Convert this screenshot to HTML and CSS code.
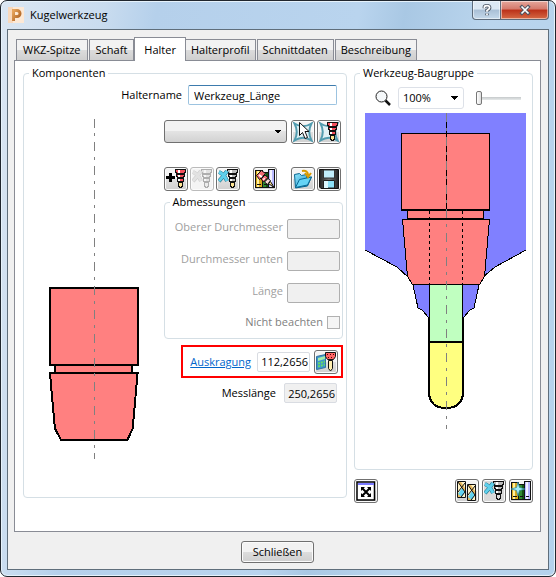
FILE: index.html
```html
<!DOCTYPE html>
<html lang="de">
<head>
<meta charset="utf-8">
<title>Kugelwerkzeug</title>
<link rel="stylesheet" href="styles.css">
</head>
<body>
<svg class="defs" aria-hidden="true">
  <defs>
    <linearGradient id="copper" x1="0" y1="0" x2="1" y2="1"><stop offset="0" stop-color="#e6a45c"/><stop offset="1" stop-color="#a75a1c"/></linearGradient>
    <linearGradient id="disk" x1="0" x2="1"><stop offset="0" stop-color="#222"/><stop offset=".5" stop-color="#777"/><stop offset="1" stop-color="#222"/></linearGradient>
    <linearGradient id="folder" x1="0" x2="1" y2="1"><stop offset="0" stop-color="#8ee6fb"/><stop offset="1" stop-color="#1687c4"/></linearGradient>
    <g id="tool">
      <path d="M.5.5h10v3h-1v1h-8v-1h-1zM1.500 5.500h8v2h-1v1h-6v-1h-1zM2.500 9.500h6v3h-6z"/>
      <path class="bit" d="M3.500 13.500h4v3l-1 2h-2l-1-2z"/>
      <path class="shine" d="M4 1v3M4 6v2M4 10v2"/>
    </g>
    <path id="star" d="M1.500 1.500Q10 7 18.500 1.500Q14 10 18.500 18.500Q10 13 1.500 18.500Q6 10 1.500 1.500z"/>
    <g id="cross"><path class="cross-edge" d="M1 2q5 2 8 9M9 1Q6 6 1 11"/><path class="cross-core" d="M1 2q5 2 8 9M9 1Q6 6 1 11"/></g>
    <g id="books" shape-rendering="crispEdges">
      <path fill="#d9a91c" stroke="#111" d="M.5 1.500h7v17h-7z"/><path fill="#fff0a0" d="M2 2h2v16H2z"/>
      <path fill="#2f8a2f" stroke="#111" d="M7.500 3.500h6v15h-6z"/><path fill="#145214" d="M11 4h2v14h-2z"/>
      <path fill="#b9b9ff" stroke="#111" d="M13.500.5h6v18h-6z"/><path fill="#f3f3ff" d="M15 1h2v17h-2z"/>
      <path stroke="#111" d="M2 15.500h4M9 15.500h3M15 15.500h3"/>
    </g>
  </defs>
</svg>

<div class="window">
  <header class="titlebar">
    <svg class="app-icon" viewBox="0 0 16 16" aria-hidden="true"><path fill="#fde9d6" d="M0 0h16v16H0z"/><path fill="#f6cfac" d="M0 0h5v16H0z" opacity=".6"/><path fill="none" stroke="url(#copper)" stroke-width="3" d="M5.500 14V3.500H9a2.700 2.700 0 0 1 0 6H6"/></svg>
    <h1>Kugelwerkzeug</h1>
    <div class="caption-buttons">
      <button class="caption help" aria-label="Hilfe"><svg viewBox="0 0 16 16"><path class="glyph-edge" d="M5 6V4.500Q5 3 8 3t3 2.500Q11 7 8 8.500V10M8 12v2"/><path class="glyph" d="M5 6V4.500Q5 3 8 3t3 2.500Q11 7 8 8.500V10M8 12v2"/></svg></button>
      <button class="caption close" aria-label="Fenster schließen"><svg viewBox="0 0 16 16"><path class="glyph-edge" d="M3 3l10 10M13 3L3 13"/><path class="glyph" d="M4 4l8 8M12 4l-8 8"/></svg></button>
    </div>
  </header>

  <main class="client">
    <div class="tabs" role="tablist">
      <button class="tab" role="tab">WKZ-Spitze</button>
      <button class="tab" role="tab">Schaft</button>
      <button class="tab active" role="tab" aria-selected="true">Halter</button>
      <button class="tab" role="tab">Halterprofil</button>
      <button class="tab" role="tab">Schnittdaten</button>
      <button class="tab" role="tab">Beschreibung</button>
    </div>

    <div class="panel" role="tabpanel">
      <fieldset class="group components">
        <legend>Komponenten</legend>
        <div class="name-row">
          <label for="name">Haltername</label>
          <input class="name" id="name" value="Werkzeug_Länge">
        </div>
        <div class="component-body">
          <svg class="holder-drawing" viewBox="0 0 140 342" role="img" aria-label="Halter">
            <g class="heavy holder">
              <path d="M26 170h88v77H26z"/><path d="M31 247h77v8H31z"/>
              <path d="M26 255h88l-5 56-5 11H37l-6-11z"/>
            </g>
            <path class="axis" d="M70.500 0v342"/>
          </svg>
          <div class="settings">
            <div class="tool-row">
              <select class="component-select" aria-label="Komponente"><option></option></select>
              <div class="pair">
                <button class="icon-button" aria-label="Auswählen"><svg viewBox="0 0 20 20"><use href="#star" class="star"/><path fill="#fff" stroke="#111" d="M6.500.5v13l3-3 2.500 6 2.500-1-2.500-6h4z"/></svg></button>
                <button class="icon-button" aria-label="Halter auswählen"><svg viewBox="0 0 20 20"><use href="#star" class="star"/><use href="#tool" x="8" class="tool red"/></svg></button>
              </div>
            </div>
            <div class="tool-row actions">
              <div class="pair">
                <button class="icon-button" aria-label="Hinzufügen"><svg viewBox="0 0 20 20"><path stroke="#000" stroke-width="3" d="M0 8.500h9M4.500 4v9"/><use href="#tool" x="9" class="tool red"/></svg></button>
                <button class="icon-button" disabled aria-label="Entfernen"><svg class="faded" viewBox="0 0 20 20"><use href="#tool" x="9" class="tool"/><use href="#cross" y="1" class="mono"/></svg></button>
                <button class="icon-button" aria-label="Alle entfernen"><svg viewBox="0 0 20 20"><use href="#tool" x="9" class="tool yellow-bit"/><use href="#cross" y="1"/></svg></button>
              </div>
              <button class="icon-button" aria-label="Datenbank"><svg viewBox="0 0 20 20"><use href="#books"/><g stroke="#111"><path fill="#f16b75" d="M1.500 6.500l5-5 4 3-6 6zM6 10l4-4 3 2.500L8.500 13z"/><path fill="#f9d5d8" d="M9.500 13l3.500-3.500 2.500 2-3 4z"/><path fill="#ffe492" d="M13.500 14.500l2-2 3.500 6z"/></g><path stroke="#fff" stroke-width="2" d="M4 6l3 2M8.500 9.500l1 1"/></svg></button>
              <div class="pair">
                <button class="icon-button" aria-label="Öffnen"><svg viewBox="0 0 20 20"><path fill="url(#folder)" stroke="#096792" d="M1.500 5.500l5-1 2 2 5-1v3l5-.5-4 9-12 2z"/><path fill="#65d3f5" stroke="#096792" d="M2.500 18.500l4-8 12-2.500-4 8z"/><path fill="none" stroke="#d99a00" stroke-width="2" d="M9 2q6-1 6 4M12 4l3 4 3-4"/></svg></button>
                <button class="icon-button" aria-label="Speichern"><svg viewBox="0 0 20 20"><path fill="url(#disk)" stroke="#111" d="M.5.5h19v19H2l-1.500-1.500z"/><path fill="#c3eefb" stroke="#333" d="M4.500 1v8h11V1z"/><path fill="#8de0f7" stroke="#222" d="M4.500 11.500h11V19h-11z"/><path fill="#ddf8ff" d="M5 12h4v7H5z"/></svg></button>
              </div>
            </div>
            <fieldset class="group dimensions" disabled>
              <legend>Abmessungen</legend>
              <div class="field"><label for="upper">Oberer Durchmesser</label><input id="upper"></div>
              <div class="field"><label for="lower">Durchmesser unten</label><input id="lower"></div>
              <div class="field"><label for="length">Länge</label><input id="length"></div>
              <div class="field check"><label for="ignore">Nicht beachten</label><input type="checkbox" id="ignore"></div>
            </fieldset>
            <div class="overhang">
              <a href="#overhang" id="overhang-label">Auskragung</a>
              <input id="overhang" aria-labelledby="overhang-label" value="112,2656">
              <button class="icon-button" aria-label="Auskragung berechnen"><svg viewBox="0 0 20 20"><path fill="#3f94cc" stroke="#2f72a0" d="M.5 4.500l9-2v13l-9 2z"/><path fill="#a3edac" d="M2 6l7-2v3L2 9z"/><path stroke="#67dc66" stroke-width="2" stroke-dasharray="2 1" d="M2 11.500l7-2M2 14.500l7-2"/><path fill="#f66" stroke="#111" d="M9.500.5h10v4l-2 3h-6l-2-3z"/><path stroke="#500" stroke-dasharray="1 2" d="M11 2.500h8M12 5.500h6"/><path fill="#ffeeb0" stroke="#111" d="M12.500 8.500h4v8l-2 2.500-2-2.500z"/></svg></button>
            </div>
            <div class="gauge">
              <label for="gauge">Messlänge</label>
              <input id="gauge" value="250,2656" readonly>
            </div>
          </div>
        </div>
      </fieldset>

      <div class="assembly-column">
        <fieldset class="group assembly">
          <legend>Werkzeug-Baugruppe</legend>
          <div class="zoom-row">
            <svg class="magnifier" viewBox="0 0 16 16" aria-hidden="true"><circle cx="6.500" cy="6.500" r="5.500" fill="#f5f8fa" stroke="#222"/><path d="M10.500 10.500l4.500 4.500" stroke="#111" stroke-width="2.500"/></svg>
            <select class="zoom-select" aria-label="Zoom"><option>100%</option></select>
            <input class="zoom-slider" type="range" min="0" max="100" value="0" aria-label="Zoomstufe">
          </div>
          <svg class="assembly-drawing" viewBox="0 0 161 318" role="img" aria-label="Werkzeug-Baugruppe">
            <path fill="#8080ff" d="M0 0h161v137l-31 17-12 10-4 8-5 23-4 2-7 8H64l-7-8-4-2-5-23-5-8-11-10L0 137z"/>
            <path class="outline" d="M0 137l32 17 11 10 5 8 5 23 4 2 7 8M161 137l-31 17-12 10-4 8-5 23-4 2-7 8"/>
            <g class="light holder">
              <path d="M36.500 20.500h88v76h-88z"/><path d="M42.500 97.500h76v8h-76z"/>
              <path d="M37.500 106.500h87l-5 57-5 8h-67l-5-8z"/>
            </g>
            <path class="outline heavy-line" d="M36 97h89M42 106h77"/>
            <path class="outline" stroke-dasharray="3 3" d="M64.500 98v74M97.500 98v74"/>
            <path fill="#c0ffc0" d="M64 172h33v57H64z"/>
            <path fill="#ffff80" d="M64 229h33v51q-1 15-16 15t-17-15z"/>
            <path class="outline" d="M64 171.500h34M64.500 172v33M97 172v33"/>
            <path class="outline heavy-line" d="M64 205v75q1 15 17 15t17-15v-75M64 229h33"/>
            <path stroke="#808080" d="M81.500 0v97"/>
            <path stroke="#000" stroke-dasharray="6 3 6 9" d="M81.500 9v88"/>
            <path class="axis" d="M81.500 96v220"/>
          </svg>
        </fieldset>
        <div class="view-buttons">
          <button class="icon-button" aria-label="Einpassen"><svg viewBox="0 0 20 20"><path fill="#fff" stroke="#000" stroke-width="1.500" d="M1 1h17.500v18H1z"/><path fill="#7a7aff" d="M2 2h16v2H2z"/><path stroke="#000" stroke-width="2" d="M6 7l8 8M14 7l-8 8"/><path fill="#000" d="M5 6h4L5 10zM15 6v4l-4-4zM5 16v-4l4 4zM15 16h-4l4-4z"/></svg></button>
          <div class="view-group">
            <button class="icon-button" aria-label="Werkzeuge"><svg viewBox="0 0 20 20"><g id="flute"><path fill="#fff2c5" stroke="#111" d="M.5.500h8v16h-8z"/><path fill="#e9bb60" d="M1 1h3l4 6v5zM1 11l3 5H1z"/><path fill="#63d3ef" d="M1 13l4-6 3 4-3 5z"/><path fill="none" stroke="#111" d="M1 1l7 10-4 5M8 2L1 11"/></g><use href="#flute" x="10" y="3"/></svg></button>
            <button class="icon-button shaded" aria-label="Halter entfernen"><svg viewBox="0 0 20 20"><use href="#tool" x="9" class="tool"/><use href="#cross" y="1"/></svg></button>
            <button class="icon-button" aria-label="Zur Datenbank"><svg viewBox="0 0 20 20"><use href="#books"/><path fill="#a5effa" stroke="#247e96" stroke-width=".7" d="M7 1l1.500 5.500L14 8l-5.500 1.500L7 15 5.500 9.500 0 8l5.500-1.500z"/></svg></button>
          </div>
        </div>
      </div>
    </div>

    <footer><button class="dismiss">Schließen</button></footer>
  </main>
</div>
</body>
</html>
```
FILE: styles.css
```css
* { box-sizing: border-box; }

body {
  margin: 0;
  background: #fff;
  color: #000;
  font: 11px/18px "Open Sans", "Noto Sans", sans-serif;
}

button, input, select { font: inherit; color: inherit; margin: 0; }
button { padding: 0; }
label, legend { white-space: nowrap; }
.defs { position: absolute; width: 0; height: 0; }

.window {
  min-height: 100vh;
  display: flex;
  flex-direction: column;
  padding: 0 6px 6px;
  border: 1px solid #20262e;
  border-radius: 7px;
  background: linear-gradient(100deg, #dbe6f2 0, #c9dcef 16%, #b5d0eb 24%, #b9d4ee 55%, #a9c8e4 62%, #bad5ed 75%, #b4d2ed 100%);
  box-shadow: inset 0 0 0 1px #e6f2fb;
}

.titlebar { display: flex; align-items: center; gap: 6px; height: 28px; padding-left: 1px; }
.app-icon { width: 16px; height: 16px; }
h1 { margin: 0; font-size: 11px; font-weight: 400; flex: 1; }
.caption-buttons { display: flex; align-self: flex-start; }
.caption {
  display: flex;
  align-items: center;
  justify-content: center;
  height: 19px;
  border: 1px solid #5d6b7b;
  border-top: 0;
  box-shadow: inset 0 0 0 1px #ffffff80;
}
.caption svg { width: 14px; height: 14px; fill: none; }
.help { width: 29px; border-radius: 0 0 0 4px; background: linear-gradient(#dce8f3 0 45%, #a9bfd5 50%, #c5d9eb); }
.close { width: 48px; border-left: 0; border-radius: 0 0 4px 0; background: linear-gradient(#e5a79c 0, #d4796b 45%, #bb3019 50%, #d66a45); }
.glyph-edge { stroke: #4b5563; stroke-width: 4; }
.glyph { stroke: #fff; stroke-width: 2; }

.client {
  flex: 1;
  display: flex;
  flex-direction: column;
  padding: 7px 7px 6px 6px;
  border: 1px solid #5f6e7b;
  background: #f0f0f0;
}

.tabs { display: flex; align-items: flex-end; height: 23px; padding-left: 2px; }
.tab {
  height: 21px;
  padding: 0 6px;
  border: 1px solid #898c95;
  border-bottom: 0;
  margin-right: 1px;
  background: linear-gradient(#f2f2f2 0 50%, #dcdcdc 50%, #cfcfcf);
  line-height: 20px;
}
.tab.active {
  height: 24px;
  padding: 0 9px;
  margin: 0 -1px -1px;
  background: #fff;
  z-index: 1;
}
.tab.active ~ .tab { padding: 0 5px; }

.panel {
  flex: 1;
  display: grid;
  grid-template-columns: 324fr 179fr;
  gap: 7px;
  padding: 3px 7px 28px 8px;
  border: 1px solid #898c95;
  background: #fff;
}

.group { min-width: 0; margin: 0; padding: 0; border: 1px solid #d5dfe5; border-radius: 4px; }
.group legend { height: 18px; margin-left: 5px; padding: 0 3px; }

.components { display: flow-root; margin-bottom: 5px; }
.name-row { display: flex; justify-content: flex-end; align-items: center; gap: 6px; padding: 3px 9px 0 0; }
.name {
  width: 149px;
  height: 20px;
  padding: 0 5px;
  border: 1px solid #9cc3e0;
  border-top-color: #3d7bad;
  border-radius: 2px;
}

.component-body { display: flex; justify-content: space-between; padding: 13px 3px 0 0; }
.holder-drawing { width: 140px; height: 342px; }
.settings { width: 180px; padding-top: 2px; }
.heavy { stroke: #000; stroke-width: 2; }
.light { stroke: #000; }
.holder { fill: #ff8080; }
.holder path, .axis, .outline { shape-rendering: crispEdges; }
.axis { stroke: #808080; stroke-dasharray: 9 6 3 6; }
.outline { fill: none; stroke: #000; }
.heavy-line { stroke-width: 2; }

.tool-row { display: flex; justify-content: space-between; height: 24px; padding-right: 2px; }
.actions { margin-top: 23px; }
.pair { display: flex; gap: 2px; }
select { appearance: none; border: 1px solid #707070; border-radius: 3px; }
.component-select {
  width: 123px;
  height: 23px;
  background: linear-gradient(45deg, transparent 50%, #000 50%) right 8px center / 4px 4px no-repeat, linear-gradient(135deg, #000 50%, transparent 50%) right 4px center / 4px 4px no-repeat, linear-gradient(#f2f2f2 0 50%, #e3e3e3 50%, #d2d2d2);
}
.icon-button {
  display: flex;
  align-items: center;
  justify-content: center;
  width: 24px;
  height: 24px;
  border: 1px solid #707070;
  border-radius: 3px;
  background: linear-gradient(#f4f4f4 0 50%, #e0e0e0 50%, #d0d0d0);
  box-shadow: inset 0 0 0 1px #fbfbfb;
}
.icon-button:disabled { border-color: #bbb; background: #f4f4f4; }
.icon-button svg { width: 20px; height: 20px; fill: none; }
.shaded { background: #d9d9d9; }
.faded { opacity: .3; }

.star { fill: #e0f1f5; stroke: #529caf; stroke-width: 2; }
.tool { stroke: #111; fill: #bbb; shape-rendering: crispEdges; }
.tool.red { fill: #f4505c; --bit: #ffe492; }
.tool.yellow-bit { --bit: #ffe492; }
.bit { fill: var(--bit, #ddd); }
.shine { stroke: #fff; stroke-width: 2; }
.cross-edge { stroke: var(--cross-edge, #176d83); stroke-width: 4; }
.cross-core { stroke: var(--cross-core, #5fd0ec); stroke-width: 3; }
.mono { --cross-edge: #666; --cross-core: #bbb; }

.dimensions { margin-top: 2px; padding: 8px 2px 9px 0; color: #a0a0a0; }
.dimensions legend { color: #000; }
.field { display: flex; justify-content: flex-end; align-items: center; gap: 4px; height: 20px; }
.field + .field { margin-top: 12px; }
.field label { margin-top: -4px; }
.field input { width: 53px; height: 20px; border: 1px solid #afafaf; border-radius: 2px; background: #f0f0f0; }
.field.check { height: 14px; color: #808080; }
.field.check label { margin: 0; }
.field.check input { appearance: none; width: 13px; height: 13px; border-color: #b1b1b1; border-radius: 0; background: #f5f5f5; }

.overhang { display: flex; justify-content: flex-end; align-items: center; gap: 4px; width: 162px; height: 33px; margin: 6px 0 0 auto; padding-right: 3px; border: 2px solid #f00; }
.overhang a { margin-right: 2px; color: #0066cc; text-decoration: underline; }
.overhang input, .gauge input { width: 53px; height: 20px; padding: 0 1px; border: 1px solid #d9dce2; border-radius: 2px; background: #fff; text-align: right; }
.gauge { display: flex; justify-content: flex-end; align-items: center; gap: 8px; padding: 5px 6px 0 0; }
.gauge input { background: #f0f0f0; }

.assembly-column { display: flex; flex-direction: column; min-width: 0; }
.assembly { flex: 1; }
.zoom-row { display: flex; align-items: center; height: 22px; margin-top: 5px; padding: 0 11px 0 20px; }
.magnifier { width: 16px; height: 16px; fill: none; margin-right: 7px; }
.zoom-select {
  width: 66px;
  height: 22px;
  padding: 0 4px;
  border-color: #dde1e8;
  background: linear-gradient(45deg, transparent 50%, #000 50%) right 8px center / 4px 4px no-repeat, linear-gradient(135deg, #000 50%, transparent 50%) right 4px center / 4px 4px no-repeat, #fff;
}
.zoom-slider { appearance: none; flex: 1; min-width: 0; height: 16px; margin-left: 12px; background: linear-gradient(#c5c9cb, #e7eaea) center / 100% 3px no-repeat; }
.zoom-slider::-webkit-slider-thumb { appearance: none; width: 6px; height: 14px; border: 1px solid #777; border-radius: 2px; background: linear-gradient(90deg, #fff, #ddd); }
.assembly-drawing { display: block; width: 161px; height: 318px; margin: 4px auto 0 10px; }

.view-buttons { display: flex; justify-content: space-between; padding-top: 9px; }
.view-group { display: flex; gap: 3px; }

footer { display: flex; justify-content: center; padding-top: 9px; }
.dismiss { width: 73px; height: 22px; border: 1px solid #707070; border-radius: 3px; background: linear-gradient(#f2f2f2 0 50%, #dddddd 50%, #cfcfcf); box-shadow: inset 0 0 0 1px #fbfbfb; }
```
